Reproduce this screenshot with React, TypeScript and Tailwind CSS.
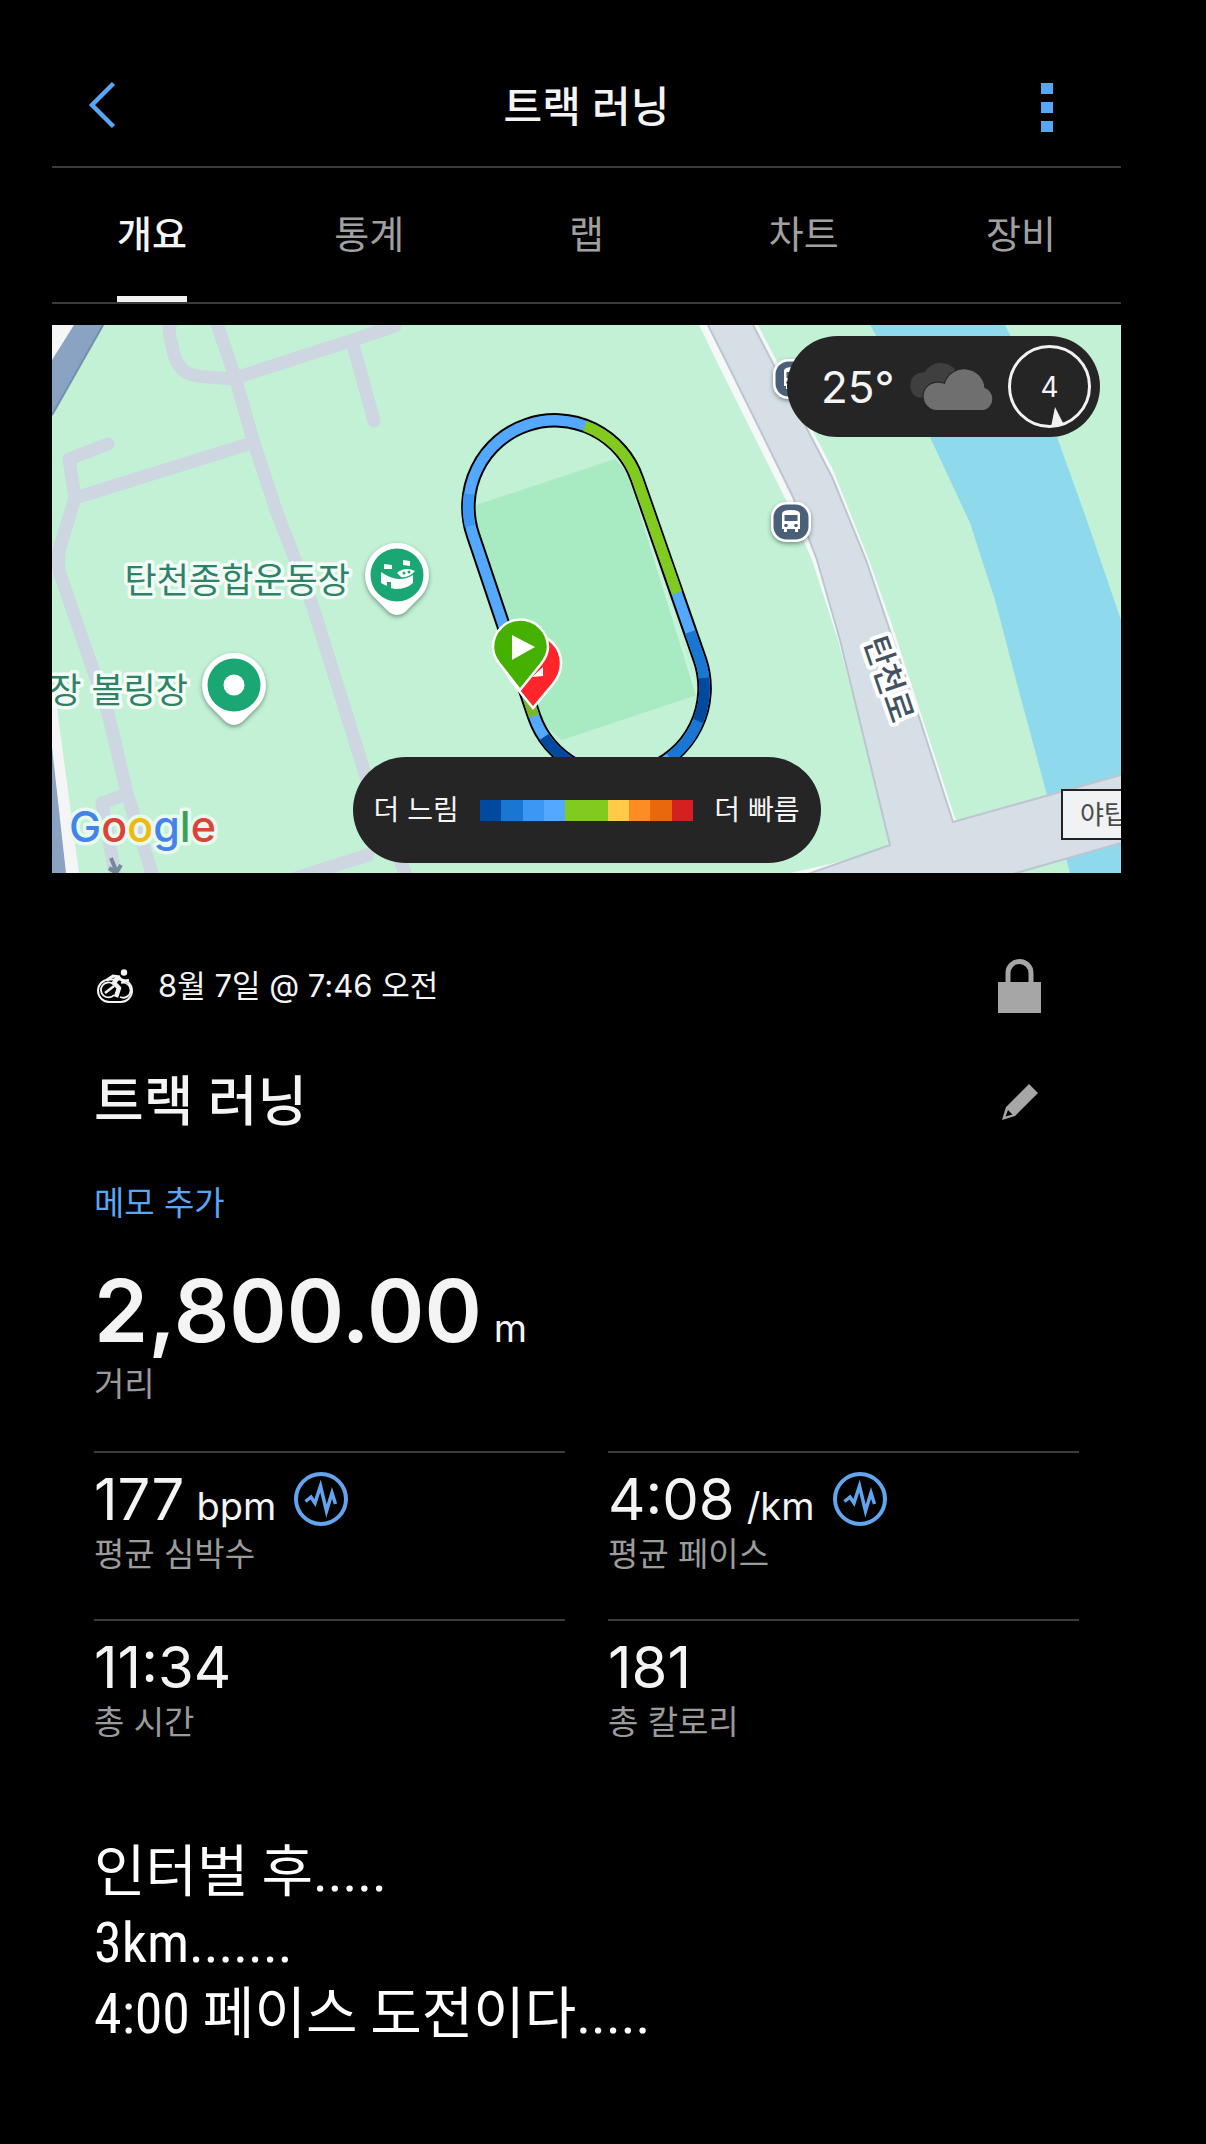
import React, { useState } from 'react';

const TABS = ['개요', '통계', '랩', '차트', '장비'];

// Slowest to fastest
const PACE_COLORS = [
  'bg-[#00499f]',
  'bg-[#1976d2]',
  'bg-[#3b97f3]',
  'bg-[#55a8ff]',
  'bg-[#80cb1e]',
  'bg-[#80cb1e]',
  'bg-[#ffcb49]',
  'bg-[#fd8c25]',
  'bg-[#ea680c]',
  'bg-[#d42020]',
];

// One closed lap, each bend drawn as two arcs
const LAP =
  'M473 535 A86.700 86.700 0 0 1 527 425 A86.700 86.700 0 0 1 637 479 L700 660 A87.600 87.600 0 0 1 645 771 A87.600 87.600 0 0 1 534 716 Z';

interface Stat {
  label: string;
  value: string;
  unit?: string;
  hasChart?: boolean;
}

const STATS: Stat[] = [
  { label: '평균 심박수', value: '177', unit: 'bpm', hasChart: true },
  { label: '평균 페이스', value: '4:08', unit: '/km', hasChart: true },
  { label: '총 시간', value: '11:34' },
  { label: '총 칼로리', value: '181' },
];

const Header: React.FC = () => (
  <header className="flex items-center justify-between border-b-2 border-[#3c3c3c] pt-[44px] pr-[68px] pl-[36px]">
    <button aria-label="뒤로" className="flex h-[122px] w-[44px] items-center">
      <svg viewBox="0 0 28 48" className="h-12 w-7" fill="none" stroke="#58a6f6" strokeWidth="4.500">
        <path d="M25.500 2.500 L4 24 L25.500 45.500" />
      </svg>
    </button>
    <h1 className="pt-1 text-[42px] leading-[48px] font-medium">트랙 러닝</h1>
    <button aria-label="더 보기" className="flex h-[122px] w-3 flex-col items-center justify-center gap-2 pt-1">
      <span className="h-[11px] w-3 bg-[#58a6f6]" />
      <span className="h-[11px] w-3 bg-[#58a6f6]" />
      <span className="h-[11px] w-3 bg-[#58a6f6]" />
    </button>
  </header>
);

const Tabs: React.FC = () => {
  const [active, setActive] = useState('개요');

  return (
    <nav className="flex justify-between border-b-2 border-[#3c3c3c] px-[65px]">
      {TABS.map((tab) => (
        <button
          key={tab}
          onClick={() => setActive(tab)}
          className={`flex h-[134px] w-[70px] items-center justify-center border-b-[6px] pt-1 text-[38px] whitespace-nowrap ${
            active === tab ? 'border-[#f2f2f2] font-medium text-[#f4f4f4]' : 'border-transparent text-[#a0a0a0]'
          }`}
        >
          {tab}
        </button>
      ))}
    </nav>
  );
};

const PlacePin: React.FC<{ x: number; y: number; children: React.ReactNode }> = ({ x, y, children }) => (
  <g transform={`translate(${x} ${y})`}>
    <path
      d="M0 -32 A32 32 0 0 1 24 21 L8 37 Q0 43 -8 37 L-24 21 A32 32 0 0 1 0 -32 Z"
      fill="#fff"
      filter="url(#pinShadow)"
    />
    <circle r="26.500" fill="#1aa773" />
    {children}
  </g>
);

const BusStop: React.FC<{ x: number; y: number }> = ({ x, y }) => (
  <g transform={`translate(${x} ${y})`}>
    <rect x="-20" y="-20" width="40" height="40" rx="15" fill="#fff" filter="url(#pinShadow)" />
    <rect x="-17.500" y="-17.500" width="35" height="35" rx="13" fill="#4a6079" />
    <path d="M-9 -8 Q-9 -12 0 -12 Q9 -12 9 -8 V7 H7 V10 H4 V7 H-4 V10 H-7 V7 H-9 Z" fill="#fff" />
    <rect x="-6.500" y="-7" width="13" height="6" fill="#4a6079" />
    <circle cx="-5" cy="3.500" r="1.800" fill="#4a6079" />
    <circle cx="5" cy="3.500" r="1.800" fill="#4a6079" />
  </g>
);

const RouteMap: React.FC = () => (
  <svg viewBox="52 325 1069 548" className="block w-full" aria-label="경로 지도">
    <defs>
      <filter id="pinShadow" x="-30%" y="-30%" width="160%" height="170%">
        <feDropShadow dx="0" dy="2" stdDeviation="2" floodColor="#2d4a3c" floodOpacity="0.55" />
      </filter>
    </defs>
    <rect x="52" y="325" width="1069" height="548" fill="#c2f1d5" />

    {/* Highway on the left edge */}
    <path d="M52 325 H74 L52 362 Z" fill="#f5f6f8" />
    <path d="M74 325 H104 L52 416 V360 Z" fill="#8ba3c2" />
    <path d="M103 325 L52 415" stroke="#7390b0" strokeWidth="2" />
    <path d="M52 700 L57 708 L79 873 H52 Z" fill="#f5f5f6" />
    <path d="M52 747 L66 873 H52 Z" fill="#8ba3c2" />

    {/* Small paths */}
    <g fill="none" stroke="#cdd6e1" strokeWidth="13" strokeLinecap="round" strokeLinejoin="round">
      <path d="M173 318 Q166 330 172 345 Q176 374 198 376 L232 379 L350 341 L395 326" />
      <path d="M215 318 L235 377 L253 440 L276 510 L312 604 L367 780 L408 880" />
      <path d="M352 341 L374 421" />
      <path d="M108 444 L69 459 L75 498 L252 443" />
      <path d="M75 498 L60 547 Q57 560 60 574 L108 713 L127 793 L154 880" />
      <path d="M102 803 L124 795 M102 803 L115 873" />
      <path d="M296 878 L368 855" />
    </g>
    <path d="M111 858 L117 873 M109 868 L116 873 L121 865" fill="none" stroke="#76889b" strokeWidth="4" />

    {/* Stream */}
    <path
      d="M870 325 H1005 L1030 375 L1057 437 L1085 515 L1121 620 V790 L1047 795 L1020 695 L995 600 L970 523 L930 437 L900 378 Z"
      fill="#8fd9ed"
    />
    <path d="M1066 858 L1070 873 H1121 V840 Z" fill="#8fd9ed" />

    {/* Main road */}
    <path
      d="M699 325 L720 368 L788 504 L812 560 L838 640 L892 842 L870 855 L790 873 H1000 L955 818 L893 628 L869 560 L833 470 L758 325 Z"
      fill="#f6f7f7"
    />
    <path
      d="M708 325 L728 365 L793 497 L817 560 L840 640 L890 845 L808 874 H1013 L1121 843 V775 L953 822 L920 720 L888 625 L866 560 L832 477 L753 325 Z"
      fill="#d6dee6"
    />
    <path
      d="M708 325 L728 365 L793 497 L817 560 L840 640 L890 845 L808 874 M1013 874 L1121 843 M1121 775 L953 822 L920 720 L888 625 L866 560 L832 477 L753 325"
      fill="none"
      stroke="#bcc6d0"
      strokeWidth="2"
    />

    {/* Pitch inside the track */}
    <path d="M470 507 L615 459 L629 475 L697 695 L562 740 L534 716 L473 535 Z" fill="#a8eac1" />
    <path d="M628 470 L697 694" stroke="#c9f3da" strokeWidth="3" />

    {/* Recorded route */}
    <path d={LAP} fill="none" stroke="#000" strokeWidth="14.500" />
    <g fill="none" strokeWidth="10.500">
      <path d={LAP} stroke="#55a8ff" />
      <path d="M470 526 A86.700 86.700 0 0 1 469 494" stroke="#3b97f3" />
      <path d="M585 426 A86.700 86.700 0 0 1 637 479 L677 593" stroke="#80cb1e" />
      <path d="M690 632 L700 660 A87.600 87.600 0 0 1 670 758" stroke="#1976d2" />
      <path d="M704 678 A87.600 87.600 0 0 1 698 721" stroke="#00499f" />
      <path d="M528 698 L534 716" stroke="#7bb829" />
      <path d="M544 737 A87.600 87.600 0 0 0 570 762" stroke="#00499f" />
    </g>

    {/* Finish and start markers */}
    <path
      d="M533 708 L512 682 Q504 670 504 662 A28 28 0 0 1 561 664 Q561 674 553 684 Z"
      fill="#ff252a"
      stroke="#fff"
      strokeWidth="2.500"
    />
    <path d="M532 677 L543 667 V676 Z" fill="#fff" />
    <path
      d="M520 690 L499 663 Q493 655 493 647 A27 27 0 0 1 548 647 Q548 655 541 664 Z"
      fill="#46b000"
      stroke="#fff"
      strokeWidth="2.500"
    />
    <path d="M512 635 L535 647 L512 660 Z" fill="#fff" />

    <BusStop x={793} y={379} />
    <BusStop x={791} y={522} />

    {/* Places */}
    <PlacePin x={397} y={575}>
      <path d="M-16 -3 Q-6 4 2 4 Q10 4 16 0 V8 Q10 14 -2 14 L-6 13 V7 H-10 V11 L-16 8 Z" fill="#fff" />
      <path d="M-13 -11 L-5 -10 V-6 L-13 -6 Z M6 -15 L13 -14 V-9 L6 -10 Z" fill="#fff" />
      <path d="M0 -2 Q8 -9 18 -4 Q12 3 4 2 Z" fill="#fff" />
      <circle cx="7" cy="-2" r="1.500" fill="#1aa773" />
      <circle cx="12" cy="-3" r="1.500" fill="#1aa773" />
    </PlacePin>
    <PlacePin x={234} y={685}>
      <circle r="10.500" fill="#fff" />
    </PlacePin>
    <g
      fill="#2e8266"
      stroke="#f2fbf6"
      strokeWidth="7"
      strokeLinejoin="round"
      paintOrder="stroke"
      fontSize="35"
      textAnchor="end"
    >
      <text x="350" y="593">탄천종합운동장</text>
      <text x="188" y="703">장 볼링장</text>
    </g>
    <text
      transform="translate(889 679) rotate(71)"
      textAnchor="middle"
      dominantBaseline="central"
      fontSize="32"
      fontWeight="500"
      fill="#42525f"
      stroke="#fff"
      strokeWidth="8"
      strokeLinejoin="round"
      paintOrder="stroke"
    >
      탄천로
    </text>
    <rect x="1062" y="790" width="90" height="49" fill="#f0f2f4" stroke="#222" strokeWidth="2" />
    <text x="1080" y="824" fontSize="26" fill="#4a4a4a">야탑</text>

    <text
      x="69"
      y="842"
      fontSize="43"
      fontWeight="500"
      stroke="#e8faf0"
      strokeWidth="7"
      strokeLinejoin="round"
      paintOrder="stroke"
    >
      <tspan fill="#4383ea">G</tspan>
      <tspan fill="#dc4437">o</tspan>
      <tspan fill="#efb90f">o</tspan>
      <tspan fill="#4383ea">g</tspan>
      <tspan fill="#3aa254">l</tspan>
      <tspan fill="#dc4437">e</tspan>
    </text>
  </svg>
);

const WeatherBadge: React.FC = () => (
  <div className="absolute top-[11px] right-[21px] flex h-[101px] w-[313px] items-center justify-between rounded-full bg-[#252525] pr-[9px] pl-[34px]">
    <span className="text-[44px] leading-none">25°</span>
    <svg viewBox="0 0 84 48" className="h-[53px] w-[92px]">
      <path d="M12 34 A12 12 0 0 1 12 12 Q16 11 18 11 A17 17 0 0 1 46 9 L30 34 Z" fill="#3f3f3f" />
      <path
        d="M29 46 A13 13 0 0 1 30 20 Q33 20 36 21 A19 19 0 0 1 73 25 A11 11 0 0 1 72 46 Z"
        fill="#6f6f6f"
        stroke="#252525"
        strokeWidth="1"
      />
    </svg>
    <div className="relative flex h-[83px] w-[83px] items-center justify-center rounded-full border-[3px] border-[#f2f2f2] text-[28px]">
      4
      <svg viewBox="0 0 14 20" className="absolute right-6 -bottom-0.5 h-5 w-3.5">
        <path d="M5 0 L14 18 Q7 20 1 20 Z" fill="#f2f2f2" />
      </svg>
    </div>
  </div>
);

const PaceLegend: React.FC = () => (
  <div className="absolute bottom-[10px] left-1/2 flex h-[106px] w-[468px] -translate-x-1/2 items-center justify-between rounded-full bg-[#252525] px-[21px] text-[28px]">
    <span>더 느림</span>
    <div className="flex h-[21px] w-[213px]">
      {PACE_COLORS.map((color, i) => (
        <span key={i} className={`flex-1 ${color}`} />
      ))}
    </div>
    <span>더 빠름</span>
  </div>
);

const ChartIcon: React.FC = () => (
  <svg viewBox="0 0 54 54" className="h-[54px] w-[54px]" fill="none" stroke="#62a5ee">
    <circle cx="27" cy="27" r="25" strokeWidth="4" />
    <path d="M11.500 29.500 L17 25 L21 31 L26.500 14 L32.500 39 L38 21 L41.500 32" strokeWidth="3.500" />
  </svg>
);

const StatCell: React.FC<{ stat: Stat }> = ({ stat }) => (
  <div className="h-[168px] border-t-2 border-[#3c3c3c] pt-[19px]">
    <div className="flex h-[54px] items-center gap-[18px]">
      <div className="flex items-baseline gap-3">
        <span className="text-[58px] leading-[54px]">{stat.value}</span>
        {stat.unit && <span className="text-[38px] leading-none">{stat.unit}</span>}
      </div>
      {stat.hasChart && (
        <button aria-label={`${stat.label} 차트`}>
          <ChartIcon />
        </button>
      )}
    </div>
    <p className="mt-2 text-[33px] leading-[40px] text-[#9b9b9b]">{stat.label}</p>
  </div>
);

const App: React.FC = () => (
  <div className="min-h-screen bg-black pr-[85px] pb-20 pl-[52px] font-['Inter','Noto_Sans_CJK_KR',sans-serif] text-[#f4f4f4]">
    <Header />
    <Tabs />

    <div className="relative mt-[21px] overflow-hidden">
      <RouteMap />
      <WeatherBadge />
      <PaceLegend />
    </div>

    <main className="px-[42px] pt-[86px]">
      <div className="flex items-center justify-between pr-[38px] pl-0.5">
        <div className="flex items-center gap-6">
          <svg viewBox="0 0 38 38" className="h-[38px] w-[38px] shrink-0" fill="none" stroke="#f4f4f4">
            <rect x="2" y="12.500" width="34" height="22.500" rx="11.200" strokeWidth="2" />
            <path d="M17 17 A7.500 7.500 0 1 0 18 28" strokeWidth="1.800" />
            <path d="M24 30 A7.500 7.500 0 1 0 25 16" strokeWidth="1.800" />
            <path d="M9 26 L18 19" strokeWidth="2.500" />
            <path d="M11 13 L17 9 L24 10" strokeWidth="3" />
            <path d="M22 10 L18 16 L23 21 L20 30" strokeWidth="4.500" strokeLinejoin="round" />
            <path d="M23 10 L27 14.500 L33 13" strokeWidth="2.500" />
            <circle cx="28" cy="5.500" r="3.200" fill="#f4f4f4" stroke="none" />
          </svg>
          <span className="text-[31px] leading-9">8월 7일 @ 7:46 오전</span>
        </div>
        <button aria-label="비공개" className="flex w-[43px] justify-center">
          <svg viewBox="0 0 43 54" className="h-[54px] w-[43px]">
            <path d="M0 23 H43 V54 H0 Z" fill="#a6a6a6" />
            <path d="M10 24 V14 A11.500 11.500 0 0 1 33 14 V24" fill="none" stroke="#a6a6a6" strokeWidth="5" />
          </svg>
        </button>
      </div>

      <div className="mt-[55px] flex items-center justify-between pr-[38px]">
        <h2 className="text-[54px] leading-[68px] font-medium">트랙 러닝</h2>
        <button aria-label="이름 편집" className="flex w-[43px] justify-center">
          <svg viewBox="0 0 36 36" className="h-9 w-9">
            <path
              fillRule="evenodd"
              fill="#a6a6a6"
              d="M27 0 L36 9 L13 32 L0 36 L4 23 Z M6 26 L3.500 32.500 L10.500 30.500 Z"
            />
          </svg>
        </button>
      </div>

      <button className="mt-[47px] block text-[33px] leading-[40px] text-[#58a6f6]">메모 추가</button>

      <div className="mt-[39px] flex items-baseline gap-3">
        <span className="text-[87px] leading-[98px] font-semibold">2,800.00</span>
        <span className="text-[38px] leading-none">m</span>
      </div>
      <p className="mt-1 text-[33px] leading-[40px] text-[#9b9b9b]">거리</p>

      <div className="mt-[47px] grid grid-cols-2 gap-x-[43px]">
        {STATS.map((stat) => (
          <StatCell key={stat.label} stat={stat} />
        ))}
      </div>

      <div className="mt-[50px] font-['Roboto_Condensed','Noto_Sans_CJK_KR',sans-serif] text-[56px] leading-[71px] text-white">
        <p>인터벌 후.....</p>
        <p>3km.......</p>
        <p>4:00 페이스 도전이다.....</p>
      </div>
    </main>
  </div>
);

export default App;
